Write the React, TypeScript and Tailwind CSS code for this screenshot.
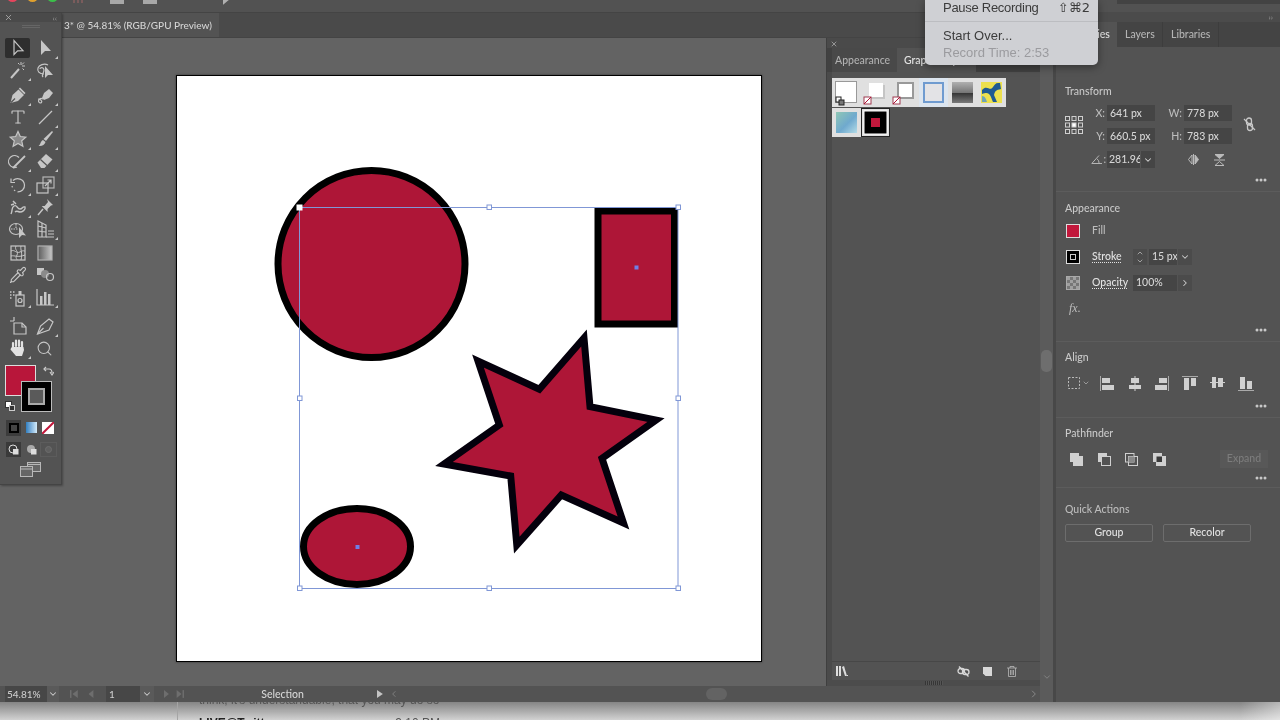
import type { ReactNode } from "react";
import { ChevronDown, ChevronLeft, ChevronRight, ChevronUp, Pipette, Search, Type, X } from "lucide-react";

const ink = "#c6c6c6";

function Ico({ size = 20, box = 20, corner, children }: { size?: number; box?: number; corner?: boolean; children: ReactNode }) {
  return (
    <svg width={size} height={size} viewBox={`0 0 ${box} ${box}`} fill="none" stroke={ink} strokeWidth={1.2} className="overflow-visible">
      {children}
      {corner && <path d="M23 18v3h-3z" fill={ink} stroke="none" />}
    </svg>
  );
}

// toolbar, one entry per row: left tool, right tool
const toolGroups: { mt: string; rows: [ReactNode, ReactNode][] }[] = [
  {
    mt: "mt-[9px]",
    rows: [
      [
        <Ico key="a"><path d="M6 2.5v14l3.6-3.6 5.4-.2z" /></Ico>,
        <Ico key="b" corner><path d="M6 2v15l4-4h6z" fill={ink} stroke="none" /></Ico>,
      ],
      [
        <Ico key="a" corner><path d="M3 18l8-9" strokeWidth={2} /><path d="M13 2v3M17 6h-3M16 2.5l-2 2M16 10l-1.5-1.5M10 3l1.5 1.5" strokeWidth={1} /></Ico>,
        <Ico key="b"><path d="M9 14C4 14 2 11 3 8c1-3 6-5 10-3" /><path d="M5 9c0-2 4-2 4 1s-3 5-1 7" /><path d="M10 6v12l3-3 5 0z" fill={ink} stroke="none" /></Ico>,
      ],
    ],
  },
  {
    mt: "mt-[3px]",
    rows: [
      [
        <Ico key="a" corner><path d="M2.5 18l2-8 6-5.5 5.5 5.5-6 6z" fill={ink} stroke="none" /><path d="M12 2.5l5.5 5.5-1.2 1.2-5.5-5.5z" fill={ink} stroke="none" /><path d="M3 17.5l4-4" stroke="#535353" /></Ico>,
        <Ico key="b" corner><path d="M7 13l2-5 5-4 4 4-4 5-5 2z" fill={ink} stroke="none" /><path d="M8 14c-4-2-6 3-3 4 3 0 2-4 -2-4" /></Ico>,
      ],
      [
        <Type key="a" size={18} color={ink} strokeWidth={1.6} />,
        <Ico key="b" corner><path d="M4 17L17 4" /></Ico>,
      ],
      [
        <Ico key="a" corner><path d="M10 2.5l2.3 5 5.5.6-4.1 3.7 1.2 5.4-4.9-2.8-4.9 2.8 1.2-5.4-4.1-3.7 5.5-.6z" fill="#8a8a8a" /></Ico>,
        <Ico key="b" corner><path d="M17 2l1 1-7 9-2.5-2z" fill={ink} stroke="none" /><path d="M8 11l2.5 2c-1 3-3.5 4.5-7 4 2-1 2-5 4.5-6z" fill={ink} stroke="none" /></Ico>,
      ],
      [
        <Ico key="a" corner><path d="M11 6.5A6 6 0 1 0 9 16" /><path d="M5 17L17 5" strokeWidth={1.8} /></Ico>,
        <Ico key="b" corner><path d="M2.5 11.5L11 3l6.5 5.5-8 8.5H6z" fill={ink} stroke="none" /><path d="M5.5 8.5l6.5 6" stroke="#535353" /></Ico>,
      ],
    ],
  },
  {
    mt: "mt-[2px]",
    rows: [
      [
        <Ico key="a" corner><path d="M5 5.5C9 2 16 4 16.5 10c.3 4-3 7-7 6.8" /><path d="M3 3.5v4h4" /><path d="M4 11l.6 2M6 15l1.4 1" strokeDasharray="1.5 1" /></Ico>,
        <Ico key="b" corner><rect x="8" y="2" width="11" height="11" stroke="#b5b5b5" /><rect x="2" y="8" width="11" height="10" /><path d="M10 11l6-6M12.5 5H16v3.5" /></Ico>,
      ],
      [
        <Ico key="a" corner><path d="M3 17c2-4 0-6 3-8s3 3 6 3 2-3 5-2c1 3-3 5-5 5s-3-2-5 0" strokeWidth={1.4} /><path d="M5 4l3 3M3 8l3-1" strokeWidth={1.5} /></Ico>,
        <Ico key="b" corner><path d="M12 2l6 6-2 .6-3.5 3.5.2 3-6-6 3-.2L13 5z" fill={ink} stroke="none" /><path d="M8 12l-5 6" strokeWidth={1.4} /></Ico>,
      ],
      [
        <Ico key="a"><ellipse cx="8" cy="10" rx="6.5" ry="5.5" /><path d="M3 10h7M8 5v4" strokeDasharray="1.5 1" /><path d="M11 8v11l3-3 4 .5z" fill={ink} stroke="none" /></Ico>,
        <Ico key="b" corner><path d="M3 2l8 4v12H3z" /><path d="M3 7l8 2M3 12l8 1M7 4v14" /><path d="M13 12h6M13 15h6M11 18h8" strokeWidth={1} /></Ico>,
      ],
    ],
  },
  {
    mt: "mt-[2px]",
    rows: [
      [
        <Ico key="a"><rect x="3" y="3" width="14" height="14" /><path d="M3 8c4-2 5 3 9 1s3-1 5-1M3 13c4-1 6 2 14-1M8 3c-2 4 3 5 1 9s0 3 0 5M13 3c-1 4 2 6 0 14" strokeWidth={1} /></Ico>,
        <Ico key="b"><defs><linearGradient id="gt"><stop offset="0" stopColor="#5c5c5c" /><stop offset="1" stopColor="#c8c8c8" /></linearGradient></defs><rect x="3" y="3" width="14" height="14" fill="url(#gt)" stroke="#b0b0b0" /></Ico>,
      ],
      [
        <span key="a" className="flex"><Pipette size={18} color={ink} strokeWidth={1.5} /></span>,
        <Ico key="b"><rect x="2" y="3" width="7" height="7" fill={ink} stroke="none" /><circle cx="10" cy="9" r="4" fill="#8a8a8a" stroke="none" /><circle cx="15" cy="12" r="3.5" /></Ico>,
      ],
      [
        <Ico key="a" corner><path d="M2 5h1.5M5 5h1.5M2 8h1.5M5 8h1.5M2 11h1.5" strokeWidth={1.5} /><rect x="8" y="8" width="8" height="11" /><rect x="10.5" y="4" width="3" height="4" fill={ink} stroke="none" /><circle cx="12" cy="13.5" r="2" /></Ico>,
        <Ico key="b" corner><path d="M2 2v16h17" /><rect x="5" y="9" width="2.5" height="9" fill={ink} stroke="none" /><rect x="9" y="5" width="2.5" height="13" fill={ink} stroke="none" /><rect x="13" y="7" width="2.5" height="11" fill={ink} stroke="none" /></Ico>,
      ],
    ],
  },
  {
    mt: "mt-[7px]",
    rows: [
      [
        <Ico key="a"><path d="M2 5h4M6 1v4M6 7h8l4 4v7H6z" /><path d="M14 7v4h4" /></Ico>,
        <Ico key="b" corner><path d="M2.5 18l3-8L14 3l4 3-4 8z" /><path d="M2.5 18l6-6" /></Ico>,
      ],
      [
        <Ico key="a" corner>
          <path d="M5 9V5M8 8V2.5M11 8V2.5M14 9V4" stroke="#e2e2e2" strokeWidth={2.2} strokeLinecap="round" />
          <path d="M4 9h11.5l.5 3-2 6H8L2.5 11.5 3 10z" fill="#e2e2e2" stroke="none" />
        </Ico>,
        <span key="b" className="flex"><Search size={17} color={ink} strokeWidth={1.5} /></span>,
      ],
    ],
  },
];

function Toolbox() {
  return (
    <div className="absolute left-0 top-[13px] flex h-[472px] w-[62px] flex-col border-r border-b border-[#444] bg-[#535353] shadow-[1px_1px_2px_rgba(0,0,0,0.3)]">
      <div className="flex h-[9px] items-center justify-between bg-[#4a4a4a] px-[4px]">
        <X size={9} color="#b5b5b5" strokeWidth={2} />
        <span className="text-[8px] leading-none text-[#999]">‹‹</span>
      </div>
      <div className="mx-auto mt-[3px] h-[3px] w-[18px] border-y border-[#666]" />
      {toolGroups.map((group, g) => (
        <div key={g} className={`${group.mt} flex flex-col`}>
          {group.rows.map((row, r) => (
            <div key={r} className="grid h-[22px] grid-cols-[31px_27px] items-center">
              <div className={`ml-[5px] flex h-[20px] w-[25px] items-center justify-center ${g === 0 && r === 0 ? "rounded-[2px] bg-[#2e2e2e]" : ""}`}>{row[0]}</div>
              <div className="flex items-center justify-center">{row[1]}</div>
            </div>
          ))}
        </div>
      ))}
      {/* fill and stroke */}
      <div className="relative mt-[6px] h-[49px] shrink-0">
        <div className="absolute left-[5px] top-[0px] h-[31px] w-[31px] border border-[#ddd] bg-[#b8163a]" />
        <div className="absolute left-[21px] top-[16px] flex h-[31px] w-[31px] items-center justify-center border border-[#bbb] bg-black">
          <div className="h-[17px] w-[17px] border-2 border-[#aaa] bg-[#5a5a5a]" />
        </div>
        <svg className="absolute left-[43px] top-[1px]" width="11" height="11" viewBox="0 0 11 11" fill="none" stroke="#ccc" strokeWidth="1.2">
          <path d="M1 3h5c2 0 3 1 3 4" /><path d="M3 1L1 3l2 2M7 6l2 3 2-3" />
        </svg>
        <div className="absolute left-[5px] top-[36px] h-[7px] w-[7px] border border-[#333] bg-white" />
        <div className="absolute left-[9px] top-[40px] h-[6px] w-[6px] border border-[#ccc] bg-[#333]" />
      </div>
      {/* colour, gradient, none */}
      <div className="mt-[6px] flex h-[15px] items-center pl-[6px]">
        <div className="flex h-[16px] w-[15px] items-center justify-center bg-[#3c3c3c]">
          <div className="h-[10px] w-[10px] border-2 border-black bg-[#444]" />
        </div>
        <div className="ml-[5px] h-[11px] w-[11px] bg-gradient-to-r from-[#2f7fc0] to-[#d5ecfa]" />
        <svg className="ml-[5px]" width="12" height="12" viewBox="0 0 12 12">
          <rect width="12" height="12" fill="#fff" /><path d="M0 12L12 0" stroke="#c2183c" strokeWidth="2" />
        </svg>
      </div>
      {/* draw modes */}
      <div className="mt-[6px] flex h-[16px] items-center pl-[6px]">
        <div className="flex h-[15px] w-[15px] items-center justify-center bg-[#3a3a3a]">
          <svg width="11" height="11" viewBox="0 0 11 11"><circle cx="5" cy="5" r="4" fill="none" stroke="#ddd" /><rect x="5" y="5" width="5.5" height="5.5" fill="#ddd" /></svg>
        </div>
        <div className="ml-[3px] flex h-[15px] w-[15px] items-center justify-center">
          <svg width="11" height="11" viewBox="0 0 11 11"><circle cx="5" cy="5" r="4" fill="#aaa" /><rect x="5" y="5" width="5.5" height="5.5" fill="#ddd" /></svg>
        </div>
        <div className="ml-[1px] flex h-[15px] w-[17px] items-center justify-center border border-[#5c5c5c]">
          <div className="h-[7px] w-[7px] rounded-full border border-[#6d6d6d] bg-[#5f5f5f]" />
        </div>
      </div>
      {/* screen mode */}
      <div className="mt-[5px] flex justify-center">
        <svg width="21" height="15" viewBox="0 0 21 15" fill="#666" stroke="#b8b8b8">
          <rect x="7.5" y=".5" width="13" height="9" /><path d="M7.5 2.5h13" />
          <rect x=".5" y="4.5" width="12" height="10" /><path d="M.5 7h12" />
        </svg>
      </div>
    </div>
  );
}

function Artboard() {
  const red = "#ae1637";
  const blue = "#8097d6";
  const handles: [number, number][] = [[489, 207], [678, 207], [299.5, 398], [678, 398], [299.5, 588], [489, 588], [678, 588]];
  return (
    <div className="h-[587px] w-[586px] border border-black bg-white shadow-[0_0_2px_rgba(0,0,0,0.5)]">
      <svg width="584" height="585" viewBox="177 76 584 585" className="block">
        <g fill={red} stroke="#000" strokeWidth={7} strokeMiterlimit={12}>
          <circle cx="371.5" cy="264" r="93.5" />
          <rect x="598" y="211" width="76.5" height="113" />
          <ellipse cx="357" cy="546.5" rx="53.5" ry="38" />
          <path
            d="M584 338L590 406.7L656 420L602 458.3L623.5 523L561.3 495L516.8 545L510.7 476L444 464L499.3 425L478 361L539.3 389.3Z"
            stroke="#04000c"
          />
        </g>
        <rect x="299.5" y="207.5" width="378.5" height="381" fill="none" stroke={blue} />
        {handles.map(([x, y]) => (
          <rect key={`${x}-${y}`} x={x - 2} y={y - 2} width="4.5" height="4.5" fill="#fff" stroke={blue} />
        ))}
        <rect x="297" y="205" width="5" height="5" fill="#fff" stroke="#fff" />
        <rect x="634.5" y="265.5" width="4" height="4" fill="#6f7fe6" />
        <rect x="355.5" y="545" width="4" height="4" fill="#6f7fe6" />
      </svg>
    </div>
  );
}

function Swatch({ selected, children }: { selected?: boolean; children: ReactNode }) {
  return (
    <div className={`h-[29px] w-[29px] bg-[#e0e0e0] ${selected ? "outline outline-1 -outline-offset-1 outline-[#222]" : ""}`}>
      <svg width="29" height="29" viewBox="0 0 29 29">{children}</svg>
    </div>
  );
}

const None = ({ x, y }: { x: number; y: number }) => (
  <g>
    <rect x={x} y={y} width="7" height="7" fill="#fff" stroke="#a03a50" />
    <path d={`M${x} ${y + 7}L${x + 7} ${y}`} stroke="#b01536" />
  </g>
);

function GraphicStyles() {
  return (
    <div className="flex w-[214px] flex-col border-l border-[#3f3f3f] bg-[#4a4a4a]">
      <div className="flex h-[10px] items-center pl-[3px] pt-[1px]">
        <X size={8} color="#bbb" strokeWidth={2} />
      </div>
      <div className="flex h-[24px] bg-[#414141] pl-[5px] text-[10.5px] font-medium leading-[24px]">
        <div className="w-[65px] bg-[#494949] pl-[3px] text-[#b0b0b0]">Appearance</div>
        <div className="w-[79px] bg-[#535353] pl-[7px] text-[#e4e4e4]">Graphic Styles</div>
      </div>
      <div className="ml-[5px] flex flex-1 flex-col bg-[#535353]">
        <div className="mt-[6px] flex w-[176px] flex-wrap gap-y-[1px]">
          <Swatch>
            <rect x="3.5" y="3.5" width="21" height="21" fill="#fff" stroke="#999" />
            <rect x="4" y="19" width="5" height="5" fill="#fff" stroke="#222" /><rect x="7" y="22" width="5" height="5" fill="#777" stroke="#222" />
          </Swatch>
          <Swatch>
            <rect x="10" y="7" width="14" height="14" fill="#aaa" opacity=".5" />
            <rect x="8" y="5" width="14" height="14" fill="#fff" />
            <None x={3} y={19} />
          </Swatch>
          <Swatch>
            <rect x="8" y="5" width="15" height="15" fill="#fff" stroke="#999" strokeWidth="2" />
            <None x={3} y={19} />
          </Swatch>
          <Swatch>
            <rect width="29" height="29" fill="#dce5ef" />
            <rect x="5" y="5" width="19" height="19" fill="#e3e3e6" stroke="#6f9bd0" strokeWidth="2" />
          </Swatch>
          <Swatch>
            <defs><linearGradient id="gs" x2="0" y2="1"><stop offset="0" stopColor="#b0b0b0" /><stop offset=".5" stopColor="#777" /><stop offset=".52" stopColor="#333" /><stop offset="1" stopColor="#7a7a7a" /></linearGradient></defs>
            <rect x="4" y="4" width="21" height="21" fill="url(#gs)" />
          </Swatch>
          <Swatch>
            <rect x="4" y="4" width="21" height="21" fill="#ece04f" />
            <path d="M5 12c5-6 8 2 11-3s5-4 7-4l1 6c-5 1-6 2-7 6l3 7h-4c-3-7-3-11-11-8z" fill="#1f5a92" />
            <path d="M5 18c3 0 4 3 5 6H5z" fill="#6fa4b5" />
          </Swatch>
          <Swatch>
            <defs><linearGradient id="gw" x2="1" y2="1"><stop offset="0" stopColor="#8fc7b5" /><stop offset=".55" stopColor="#6fa9ce" /><stop offset="1" stopColor="#b4dce8" /></linearGradient></defs>
            <rect x="4" y="4" width="21" height="21" fill="url(#gw)" />
          </Swatch>
          <Swatch selected>
            <rect x="3" y="3" width="23" height="23" fill="#000" stroke="#fff" />
            <rect x="10" y="10" width="9" height="9" fill="#c2183c" />
          </Swatch>
        </div>
        <div className="flex-1 border-b border-[#474747]" />
        <div className="flex h-[18px] items-center bg-[#535353] pl-[4px] pr-[23px]">
          <svg width="12" height="10" viewBox="0 0 12 10" fill="#ddd"><rect y="0" width="2" height="10" /><rect x="3" width="2" height="10" /><path d="M6 1l2-1 3 10H9z" /><rect x="11" y="9" width="1.5" height="1" /></svg>
          <div className="ml-auto flex items-center gap-[13px]">
            <svg width="13" height="11" viewBox="0 0 13 11" fill="none" stroke="#d8d8d8" strokeWidth="1.3">
              <rect x="1" y="2.5" width="6.5" height="5" rx="2.5" /><rect x="5.5" y="3.5" width="6.5" height="5" rx="2.5" /><path d="M2 .5l9.5 10" />
            </svg>
            <svg width="9" height="9" viewBox="0 0 9 9" fill="#d8d8d8"><path d="M0 0h9v9H2.5L0 6.5z" /></svg>
            <svg className="ml-[2px]" width="10" height="11" viewBox="0 0 10 11" fill="none" stroke="#b8b8b8"><path d="M0 2h10M3 2V.5h4V2M1.5 2v8.5h7V2M3.5 4v5M5 4v5M6.5 4v5" strokeWidth=".8" /></svg>
          </div>
        </div>
      </div>
      <div className="flex h-[6px] items-center justify-center bg-[#4c4c4c]">
        <div className="h-[4px] w-[18px] bg-[repeating-linear-gradient(90deg,#363636_0_1px,#555_1px_2px)]" />
      </div>
    </div>
  );
}

function StatusBar() {
  return (
    <div className="flex h-[16px] items-center bg-[#535353] text-[10px] font-medium leading-none text-[#cccccc]">
      <div className="ml-[5px] flex h-full w-[43px] items-center bg-[#474747] pl-[2px]">54.81%</div>
      <div className="flex h-full w-[12px] items-center justify-center bg-[#5a5a5a]"><ChevronDown size={10} strokeWidth={2.5} /></div>
      <svg className="ml-[11px]" width="30" height="8" viewBox="0 0 30 8" fill="#6e6e6e"><rect y="0" width="1.5" height="8" /><path d="M8 0v8L2.500 4zM24 0v8l-5-4z" /></svg>
      <div className="ml-[7px] flex h-full w-[35px] items-center bg-[#474747] pl-[3px]">1</div>
      <div className="flex h-full w-[14px] items-center justify-center bg-[#5a5a5a]"><ChevronDown size={10} strokeWidth={2.5} /></div>
      <svg className="ml-[10px]" width="24" height="8" viewBox="0 0 24 8" fill="#6e6e6e"><path d="M0 0v8l5-4zM13 0v8l5-4z" /><rect x="19" width="1.5" height="8" /></svg>
      <div className="ml-[74px] w-[41px] text-[10.5px] text-[#d6d6d6]">Selection</div>
      <svg className="ml-[75px]" width="6" height="8" viewBox="0 0 6 8" fill="#c4c4c4"><path d="M0 0v8l6-4z" /></svg>
      <ChevronLeft className="ml-[6px]" size={10} color="#888" />
      <div className="ml-[307px] h-[12px] w-[22px] rounded-full bg-[#636363]" />
      <ChevronRight className="ml-[301px]" size={12} color="#8a8a8a" />
    </div>
  );
}

function Section({ title, className, children }: { title: string; className: string; children?: ReactNode }) {
  return (
    <div className={`relative shrink-0 border-b border-[#5c5c5c] px-[9px] ${className}`}>
      <div className="text-[10.5px] font-medium leading-[14px] text-[#c8c8c8]">{title}</div>
      {children}
    </div>
  );
}

const Dots = () => (
  <svg className="ml-auto mr-[4px] block" width="12" height="4" viewBox="0 0 12 4" fill="#c8c8c8">
    <circle cx="2" cy="2" r="1.5" /><circle cx="6" cy="2" r="1.5" /><circle cx="10" cy="2" r="1.5" />
  </svg>
);

const Field = ({ children }: { children: ReactNode }) => (
  <div className="flex h-[16px] items-center bg-[#454545] pl-[3px] text-[10.5px] font-medium leading-none text-[#d6d6d6]">{children}</div>
);

const Lbl = ({ children }: { children: ReactNode }) => (
  <div className="pr-[2px] text-right text-[10.5px] font-medium leading-none text-[#bcbcbc]">{children}</div>
);

const g = "#d0d0d0";
const alignIcons = [
  <svg key="1" width="15" height="15" viewBox="0 0 15 15" fill={g}><rect width="1" height="15" fill="#aaa" /><rect x="2" y="2" width="8" height="5" /><rect x="2" y="9" width="12" height="5" /></svg>,
  <svg key="2" width="14" height="15" viewBox="0 0 14 15" fill={g}><rect x="6.5" width="1" height="15" /><rect x="3" y="2" width="8" height="5" /><rect x="1" y="9" width="12" height="4" /></svg>,
  <svg key="3" width="15" height="15" viewBox="0 0 15 15" fill={g}><rect x="14" width="1" height="15" fill="#aaa" /><rect x="5" y="2" width="8" height="5" /><rect x="1" y="9" width="12" height="5" /></svg>,
  <svg key="4" width="16" height="15" viewBox="0 0 16 15" fill={g}><rect width="16" height="1" fill="#aaa" /><rect x="2" y="2" width="5" height="12" /><rect x="9" y="2" width="5" height="8" /></svg>,
  <svg key="5" width="15" height="13" viewBox="0 0 15 13" fill={g}><rect y="6" width="15" height="1" /><rect x="2" y="1" width="4" height="11" /><rect x="8" y="2" width="5" height="9" /></svg>,
  <svg key="6" width="16" height="15" viewBox="0 0 16 15" fill={g}><rect y="14" width="16" height="1" fill="#aaa" /><rect x="2" y="1" width="5" height="12" /><rect x="9" y="5" width="5" height="8" /></svg>,
];

const pathIcons = [
  <svg key="1" width="13" height="13" viewBox="0 0 13 13" fill={g}><path d="M0 0h9v3h4v10H3V9H0z" /></svg>,
  <svg key="2" width="13" height="13" viewBox="0 0 13 13"><path d="M0 0h9v3H3v6H0z" fill={g} /><rect x="3.5" y="3.5" width="9" height="9" fill="none" stroke={g} /></svg>,
  <svg key="3" width="13" height="13" viewBox="0 0 13 13"><rect x=".5" y=".5" width="8.5" height="8.5" fill="none" stroke={g} /><rect x="3.5" y="3.5" width="9" height="9" fill="none" stroke={g} /><rect x="3.5" y="3.5" width="5.5" height="5.5" fill="#888" /></svg>,
  <svg key="4" width="13" height="13" viewBox="0 0 13 13"><path d="M0 0h9v3h4v10H3V9H0z" fill={g} /><rect x="3.5" y="3.5" width="5.5" height="5.5" fill="#3a3a3a" /></svg>,
];

function Properties() {
  return (
    <div className="flex w-[224px] flex-col bg-[#535353]">
      <div className="flex h-[10px] items-center justify-end bg-[#4b4b4b] pr-[7px] text-[8px] leading-none text-[#999]">››</div>
      <div className="flex h-[25px] bg-[#444] text-[10.5px] font-medium leading-[25px]">
        <div className="w-[61px] bg-[#535353] pl-[6px] text-[#e2e2e2]">Properties</div>
        <div className="w-[46px] border-r border-[#3d3d3d] pl-[8px] text-[#b4b4b4]">Layers</div>
        <div className="w-[56px] border-r border-[#3d3d3d] pl-[8px] text-[#b4b4b4]">Libraries</div>
      </div>
      <Section title="Transform" className="h-[145px] pt-[37px]">
        <div className="mt-[7px] grid grid-cols-[30px_12px_48px_29px_48px_1fr] grid-rows-[16px_16px_17px] items-center gap-y-[7px]">
          <svg className="row-span-2" width="18" height="18" viewBox="0 0 18 18" fill="none" stroke="#cfcfcf">
            {[0, 1, 2].flatMap((r) => [0, 1, 2].map((c) => (
              <rect key={`${r}${c}`} x={0.5 + c * 6.5} y={0.5 + r * 6.5} width="4" height="4" fill={r === 1 && c === 1 ? "#fff" : "none"} />
            )))}
          </svg>
          <Lbl>X:</Lbl><Field>641 px</Field><Lbl>W:</Lbl><Field>778 px</Field>
          {/* unlinked proportions */}
          <svg className="row-span-2 ml-[11px]" width="13" height="15" viewBox="0 0 13 15" fill="none" stroke="#c8c8c8" strokeWidth="1.3">
            <rect x="3.5" y="1" width="5" height="7" rx="2.5" /><rect x="4.5" y="6.5" width="5" height="7" rx="2.5" /><path d="M1 2l11 11" />
          </svg>
          <Lbl>Y:</Lbl><Field>660.5 px</Field><Lbl>H:</Lbl><Field>783 px</Field>
          <div className="col-span-2 col-start-1 flex items-center justify-end pr-[1px] text-[10.5px] text-[#bcbcbc]">
            <svg width="12" height="9" viewBox="0 0 12 9" fill="none" stroke="#b5b5b5"><path d="M11 8.5H.8L8 .5M6 4c1.5.8 2 2.5 2 4.5" /></svg>:
          </div>
          <div className="flex h-[17px] items-center bg-[#454545] pl-[2px] text-[10.5px] font-medium leading-none text-[#d6d6d6]">
            <span className="w-[31px] overflow-hidden whitespace-nowrap">281.96</span>
            <span className="ml-auto flex h-full w-[15px] items-center justify-center border-l border-[#555]"><ChevronDown size={10} strokeWidth={2.5} /></span>
          </div>
          <div className="col-span-2 flex items-center gap-[15px] pl-[33px]">
            <svg width="11" height="11" viewBox="0 0 11 11" fill="none" stroke="#bbb"><path d="M4 1L.5 5.5 4 10zM5.5 0v11" /><path d="M7 1l3.5 4.5L7 10z" fill="#bbb" /></svg>
            <svg width="11" height="12" viewBox="0 0 11 12" fill="none" stroke="#bbb"><path d="M1 .5h9L5.500 4.500z" fill="#bbb" /><path d="M0 6h11" /><path d="M1 11.500h9L5.500 7.500z" /></svg>
          </div>
        </div>
        <div className="mt-[10px]"><Dots /></div>
      </Section>
      <Section title="Appearance" className="h-[150px] pt-[9px]">
        <div className="mt-[8px] flex h-[16px] items-center">
          <div className="ml-[1px] h-[14px] w-[14px] border border-[#ddd] bg-[#c2183c]" />
          <span className="ml-[12px] text-[10.5px] font-medium text-[#bcbcbc]">Fill</span>
        </div>
        <div className="mt-[10px] flex h-[16px] items-center">
          <div className="ml-[1px] flex h-[14px] w-[14px] items-center justify-center border border-[#ddd] bg-black">
            <div className="h-[6px] w-[6px] border border-[#ccc]" />
          </div>
          <span className="ml-[12px] w-[41px] text-[10.5px] font-medium text-[#e2e2e2] underline decoration-dotted underline-offset-2">Stroke</span>
          <div className="flex h-[16px] w-[14px] flex-col items-center justify-center bg-[#4b4b4b] text-[#ccc]">
            <ChevronUp size={8} strokeWidth={2} /><ChevronDown size={8} strokeWidth={2} />
          </div>
          <div className="ml-[2px] flex h-[16px] w-[28px] items-center overflow-hidden whitespace-nowrap bg-[#454545] pl-[3px] text-[10.5px] font-medium text-[#d6d6d6]">15 px</div>
          <div className="ml-[1px] flex h-[16px] w-[14px] items-center justify-center bg-[#4b4b4b] text-[#ccc]"><ChevronDown size={10} strokeWidth={2.5} /></div>
        </div>
        <div className="mt-[10px] flex h-[16px] items-center">
          <div className="ml-[1px] h-[14px] w-[14px] border border-[#aaa] bg-[repeating-conic-gradient(#777_0_25%,#a0a0a0_0_50%)] bg-[length:6px_6px]" />
          <span className="ml-[12px] w-[41px] text-[10.5px] font-medium text-[#e2e2e2] underline decoration-dotted underline-offset-2">Opacity</span>
          <div className="flex h-[16px] w-[44px] items-center bg-[#454545] pl-[3px] text-[10.5px] font-medium text-[#d6d6d6]">100%</div>
          <div className="ml-[1px] flex h-[16px] w-[14px] items-center justify-center bg-[#4b4b4b] text-[#ccc]"><ChevronRight size={10} strokeWidth={2.5} /></div>
        </div>
        <div className="ml-[4px] mt-[10px] font-['Liberation_Serif',serif] text-[12px] italic leading-[14px] text-[#bdbdbd]">fx.</div>
        <div className="mt-[13px]"><Dots /></div>
      </Section>
      <Section title="Align" className="h-[76px] pt-[8px]">
        <div className="mt-[11px] flex h-[16px] items-center">
          <svg className="ml-[3px]" width="12" height="12" viewBox="0 0 12 12" fill="none" stroke="#bbb" strokeDasharray="2 1.5"><rect x=".5" y=".5" width="11" height="11" /></svg>
          <ChevronDown className="ml-[2px]" size={8} color="#bbb" strokeWidth={2} />
          <div className="ml-[10px] flex gap-[12.5px]">{alignIcons}</div>
        </div>
        <div className="mt-[13px]"><Dots /></div>
      </Section>
      <Section title="Pathfinder" className="h-[70px] pt-[8px]">
        <div className="mt-[10px] flex h-[18px] items-center pl-[5px]">
          <div className="flex gap-[14.5px]">{pathIcons}</div>
          <div className="ml-auto mr-[3px] flex h-[18px] w-[48px] items-center justify-center bg-[#585858] text-[10.5px] font-medium text-[#7c7c7c]">Expand</div>
        </div>
        <div className="mt-[8px]"><Dots /></div>
      </Section>
      <div className="flex-1 px-[9px] pt-[14px]">
        <div className="text-[10.5px] font-medium leading-[14px] text-[#bcbcbc]">Quick Actions</div>
        <div className="mt-[8px] flex gap-[10px]">
          <div className="flex h-[18px] w-[88px] items-center justify-center rounded-[2px] border border-[#6d6d6d] text-[10.5px] font-medium text-[#e2e2e2]">Group</div>
          <div className="flex h-[18px] w-[88px] items-center justify-center rounded-[2px] border border-[#6d6d6d] text-[10.5px] font-medium text-[#e2e2e2]">Recolor</div>
        </div>
      </div>
    </div>
  );
}

function RecordingMenu() {
  return (
    <div className="absolute left-[925px] top-0 h-[65px] w-[173px] rounded-b-[5px] bg-[#cfd0d4] pl-[18px] pr-[8px] font-['Liberation_Sans',Arial,sans-serif] text-[13px] leading-none text-[#3c3c3c] shadow-[0_2px_8px_rgba(0,0,0,0.4)]">
      <div className="-ml-[18px] -mr-[8px] flex h-[22px] items-center justify-between border-b border-[#bcbdc1] pb-[6px] pl-[18px] pr-[8px]">
        <span className="tracking-[-0.28px]">Pause Recording</span>
        <span className="font-['DejaVu_Sans',sans-serif] text-[13px]">⇧⌘2</span>
      </div>
      <div className="mt-[7px] leading-[14px]">Start Over...</div>
      <div className="mt-[3px] leading-[14px] text-[#9b9b9f]">Record Time: 2:53</div>
    </div>
  );
}

export default function App() {
  return (
    <div className="h-[720px] w-[1280px] overflow-hidden bg-[#636363]">
      {/* the reference is a soft video frame */}
      <div className="relative flex h-[720px] w-[1280px] flex-col overflow-hidden bg-[#636363] font-['Lato',sans-serif] blur-[0.4px]">
        {/* mac title bar */}
        <div className="flex h-[12px] shrink-0 items-start overflow-hidden bg-[#525252]">
          <div className="-mt-[9px] ml-[7px] flex gap-[9px]">
            <div className="h-[11px] w-[11px] rounded-full bg-[#e5455d]" />
            <div className="h-[11px] w-[11px] rounded-full bg-[#e0a02e]" />
            <div className="h-[11px] w-[11px] rounded-full bg-[#3bbf4a]" />
          </div>
          <div className="ml-[15px] flex h-[3px] w-[14px] gap-[2px]"><div className="w-[2px] bg-[#7b5c5c]" /><div className="w-[2px] bg-[#7b5c5c]" /><div className="w-[2px] bg-[#7b5c5c]" /></div>
          <div className="ml-[23px] h-[4px] w-[14px] bg-[#a8a8a8]" />
          <div className="ml-[19px] h-[4px] w-[14px] bg-[#a8a8a8]" />
          <div className="ml-[66px] h-[5px] w-[6px] bg-[#b0b0b0] [clip-path:polygon(0_0,100%_0,0_100%)]" />
          <div className="ml-[888px] h-[4px] w-[164px] bg-[#434343]" />
        </div>

        <div className="flex min-h-0 flex-1">
          <div className="flex w-[1056px] flex-col">
            {/* document tab */}
            <div className="flex h-[26px] shrink-0 border-y border-[#444] bg-[#4a4a4a]">
              <div className="ml-[62px] flex w-[157px] items-center whitespace-nowrap bg-[#535353] pl-[2px] text-[10px] font-medium text-[#d4d4d4]">
                3* @ 54.81% (RGB/GPU Preview)
              </div>
            </div>
            <div className="flex min-h-0 flex-1">
              <div className="flex w-[1040px] flex-col">
                <div className="flex min-h-0 flex-1">
                  <div className="w-[826px] pl-[176px] pt-[37px]">
                    <Artboard />
                  </div>
                  <GraphicStyles />
                </div>
                <StatusBar />
              </div>
              {/* panel dock scrollbar */}
              <div className="relative w-[16px] border-r-[3px] border-[#484848] bg-[#5b5b5b]">
                <div className="absolute left-[1px] top-[312px] h-[22px] w-[11px] rounded-[5px] bg-[#6e6e6e]" />
                <ChevronDown className="absolute left-[2px] top-[634px]" size={10} color="#8a8a8a" />
              </div>
            </div>
          </div>
          <Properties />
        </div>

        {/* desktop behind the app */}
        <div className="flex h-[18px] shrink-0 overflow-hidden bg-gradient-to-b from-[#858585] to-[#d2d2d2] font-['Liberation_Sans',Arial,sans-serif]">
          <div className="w-[178px] border-r border-[#a5a5a5]" />
          <div className="w-[262px] pl-[21px]">
            <div className="-mt-[9px] whitespace-nowrap text-[12px] leading-[14px] text-[#555]">think, it's understandable, that you may do so</div>
            <div className="mt-[3px] h-px bg-[#aaa]" />
            <div className="mt-[5px] flex justify-between text-[12px] font-bold leading-[14px] text-[#222]">
              <span>LIVE@Twitter</span>
              <span className="font-normal text-[#555]">9:10 PM</span>
            </div>
          </div>
          <div className="ml-auto w-[40px] bg-gradient-to-r from-transparent to-white/40" />
        </div>

        <Toolbox />
        <RecordingMenu />
      </div>
    </div>
  );
}
